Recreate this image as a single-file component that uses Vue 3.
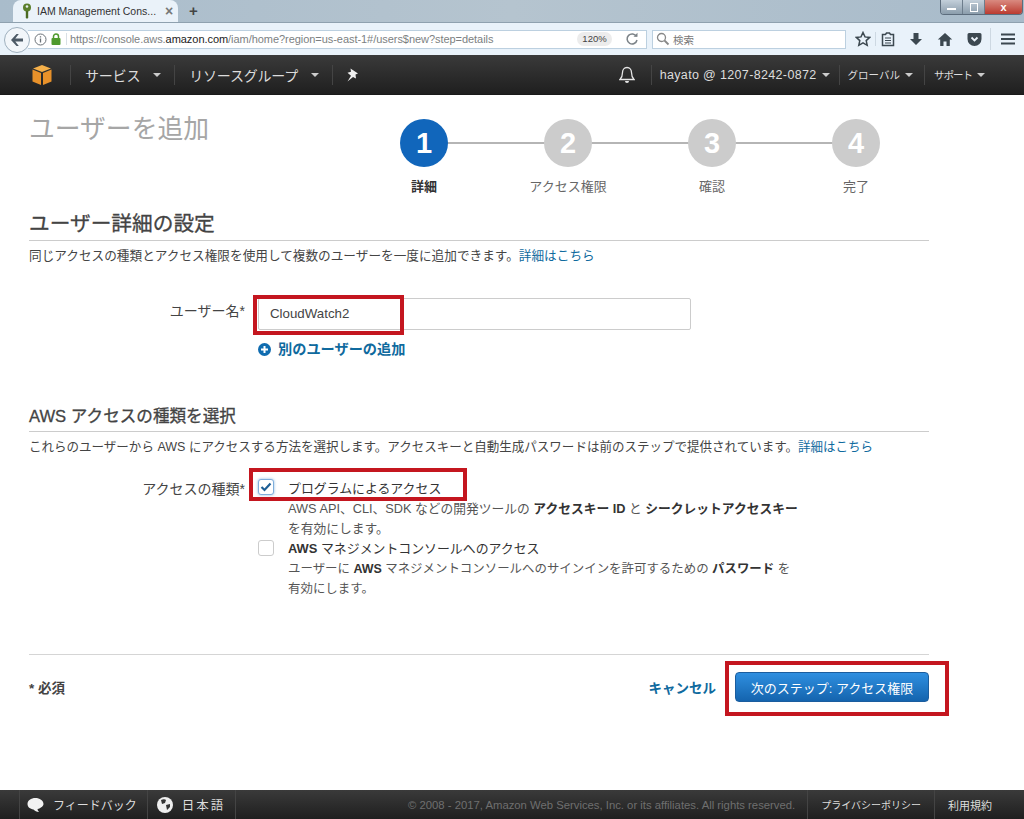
<template>
  <div class="page">
    <div class="tabstrip">
      <div class="tab">
        <svg class="favicon" width="10" height="16" viewBox="0 0 10 16"><circle cx="5" cy="4.500" r="4" fill="#5b7f2c"/><circle cx="5" cy="3.500" r="1.300" fill="#e8eef0"/><path d="M3.800 8h2.400v6.500L5 16l-1.200-1.500z" fill="#4a6a22"/></svg>
        <span class="tab-title">IAM Management Cons...</span>
        <span class="tab-close">×</span>
      </div>
      <span class="tab-plus">+</span>
      <div class="win-btns">
        <span class="win-btn"><i class="win-min"></i></span>
        <span class="win-btn"><i class="win-max"></i></span>
        <span class="win-btn win-close">x</span>
      </div>
    </div>

    <div class="toolbar">
      <span class="back">
        <svg width="16" height="14" viewBox="0 0 16 14"><path d="M7.500 1 2 7l5.500 6h2.300L6.300 8.500H14v-3H6.300L9.800 1z" fill="#4d5a66"/></svg>
      </span>
      <div class="urlbar">
        <svg class="info" width="13" height="13" viewBox="0 0 13 13"><circle cx="6.500" cy="6.500" r="5.500" fill="none" stroke="#6b7278"/><path d="M6.500 5.500v4M6.500 3.200v1.200" stroke="#6b7278" stroke-width="1.300"/></svg>
        <svg class="lock" width="10" height="12" viewBox="0 0 10 12"><path d="M2.500 5V3.500a2.500 2.500 0 0 1 5 0V5" fill="none" stroke="#4f9a2d" stroke-width="1.500"/><rect x="0.500" y="5" width="9" height="7" rx="1" fill="#4f9a2d"/></svg>
        <span class="url">https://console.aws.<b>amazon.com</b>/iam/home?region=us-east-1#/users$new?step=details</span>
        <span class="zoom">120%</span>
        <svg class="reload" width="14" height="14" viewBox="0 0 14 14"><path d="M11.500 4.500A5 5 0 1 0 12 8" fill="none" stroke="#7c8388" stroke-width="1.500"/><path d="M8.500 4.800h4v-4z" fill="#7c8388"/></svg>
      </div>
      <div class="searchbar">
        <svg width="14" height="14" viewBox="0 0 14 14"><circle cx="5.500" cy="5.500" r="4" fill="none" stroke="#888" stroke-width="1.300"/><path d="m8.500 8.500 4 4" stroke="#888" stroke-width="1.800"/></svg>
        <span>検索</span>
      </div>
      <div class="tool-icons">
        <svg width="16" height="16" viewBox="0 0 16 16"><path d="m8 1.500 2 4.400 4.700.5-3.500 3.200 1 4.700L8 11.900l-4.200 2.400 1-4.700L1.300 6.400 6 5.900z" fill="none" stroke="#3c4850" stroke-width="1.500"/></svg>
        <span class="tool-sep"></span>
        <svg class="ic-list" width="14" height="16" viewBox="0 0 14 16"><path d="M1.500 3.500h3l1-1.500h3l1 1.500h3v11h-11z" fill="none" stroke="#3c4850" stroke-width="1.500"/><path d="M4 7h6M4 9.500h6M4 12h6" stroke="#3c4850"/></svg>
        <svg class="ic-down" width="14" height="15" viewBox="0 0 14 15"><path d="M4.500 1h5v6H13l-6 6-6-6h3.500z" fill="#3c4850"/></svg>
        <svg class="ic-home" width="16" height="14" viewBox="0 0 16 14"><path d="M8 1 .8 7.500h2.400V14h3.300V9.500h3V14h3.300V7.500h2.400z" fill="#3c4850"/></svg>
        <svg class="ic-pocket" width="15" height="14" viewBox="0 0 15 14"><path d="M2 1h11a1.500 1.500 0 0 1 1.500 1.500V7a7 7 0 0 1-14 0V2.500A1.500 1.500 0 0 1 2 1z" fill="#3c4850"/><path d="m4.500 5.500 3 3 3-3" fill="none" stroke="#eaf2f9" stroke-width="1.800"/></svg>
        <span class="tool-sep tool-sep-2"></span>
        <svg class="ic-menu" width="14" height="12" viewBox="0 0 14 12"><path d="M0 1.500h14M0 6h14M0 10.500h14" stroke="#3c4850" stroke-width="2"/></svg>
      </div>
    </div>

    <div class="console-nav">
      <svg class="aws-cube" width="22" height="22" viewBox="0 0 22 22"><path d="M11 1 2 4.500 11 8l9-3.500z" fill="#f5b04a"/><path d="M1.500 5.500 10 9v12l-8.500-3.500z" fill="#e8912a"/><path d="M20.500 5.500 12 9v12l8.500-3.500z" fill="#e8912a"/></svg>
      <span class="nav-sep"></span>
      <span class="nav-item nav-big">サービス<i class="caret"></i></span>
      <span class="nav-sep"></span>
      <span class="nav-item nav-big">リソースグループ<i class="caret"></i></span>
      <span class="nav-sep"></span>
      <svg class="pin" width="14" height="14" viewBox="0 0 14 14"><path d="M5.500.5 13 5.500l-2.500 1 .5 4-3-1.500L2.500 13.500 6 7.800 2.500 4.800l3.500-1z" fill="#f0f0f0"/></svg>
      <span class="spacer"></span>
      <svg class="bell" width="16" height="18" viewBox="0 0 16 18"><path d="M8 1.500c-3 0-4.500 2.500-4.500 5 0 4-1 5.500-2.500 7h14c-1.500-1.500-2.500-3-2.500-7 0-2.500-1.500-5-4.500-5z" fill="none" stroke="#e6e6e6" stroke-width="1.300"/><path d="M6 15a2 2 0 0 0 4 0z" fill="#e6e6e6"/></svg>
      <span class="nav-sep"></span>
      <span class="nav-item nav-user">hayato @ 1207-8242-0872<i class="caret caret-sm"></i></span>
      <span class="nav-sep"></span>
      <span class="nav-item nav-small">グローバル<i class="caret caret-sm"></i></span>
      <span class="nav-sep"></span>
      <span class="nav-item nav-small nav-support">サポート<i class="caret caret-sm"></i></span>
    </div>

    <main class="content">
      <div class="wizard-head">
        <h1>ユーザーを追加</h1>
        <ol class="steps">
          <li v-for="(s, i) in steps" :key="s" class="step" :class="{ active: i === 0 }">
            <span class="circle">{{ i + 1 }}</span>
            <span class="step-label">{{ s }}</span>
          </li>
        </ol>
      </div>

      <h2 class="first">ユーザー詳細の設定</h2>
      <p class="desc desc-1">同じアクセスの種類とアクセス権限を使用して複数のユーザーを一度に追加できます。<a>詳細はこちら</a></p>

      <div class="form-row name-row">
        <label>ユーザー名*</label>
        <div class="name-field">
          <div class="input">CloudWatch2<span class="mark mark-name"></span></div>
          <a class="add-user">
            <svg width="13" height="13" viewBox="0 0 13 13"><circle cx="6.500" cy="6.500" r="6.500" fill="#0f6cb0"/><path d="M6.500 3v7M3 6.500h7" stroke="#fff" stroke-width="2"/></svg>
            別のユーザーの追加
          </a>
        </div>
      </div>

      <h2 class="second">AWS アクセスの種類を選択</h2>
      <p class="desc desc-2">これらのユーザーから AWS にアクセスする方法を選択します。アクセスキーと自動生成パスワードは前のステップで提供されています。<a>詳細はこちら</a></p>

      <div class="form-row access-row">
        <label>アクセスの種類*</label>
        <div class="options">
          <div class="option">
            <span class="check on">
              <svg width="12" height="10" viewBox="0 0 12 10"><path d="m1.500 5 3 3 6-6.500" fill="none" stroke="#1d5f96" stroke-width="2.200"/></svg>
            </span>
            <div class="opt-body">
              <div class="opt-title">プログラムによるアクセス</div>
              <div class="opt-text">AWS API、CLI、SDK などの開発ツールの <b>アクセスキー ID</b> と <b>シークレットアクセスキー</b><br>を有効にします。</div>
            </div>
            <span class="mark mark-access"></span>
          </div>
          <div class="option option-2">
            <span class="check"></span>
            <div class="opt-body">
              <div class="opt-title"><b>AWS</b> マネジメントコンソールへのアクセス</div>
              <div class="opt-text">ユーザーに <b>AWS</b> マネジメントコンソールへのサインインを許可するための <b>パスワード</b> を<br>有効にします。</div>
            </div>
          </div>
        </div>
      </div>

      <div class="actions">
        <span class="required">* 必須</span>
        <a class="cancel">キャンセル</a>
        <button class="next">次のステップ: アクセス権限<span class="mark mark-next"></span></button>
      </div>
    </main>

    <footer class="footer">
      <span class="foot-sep foot-first"></span>
      <svg class="foot-bubble" width="17" height="16" viewBox="0 0 17 16"><path d="M8.500 1C4 1 .5 3.500.5 7c0 3 2.500 5 6 5.500 1.500 1.500 3 2.500 5.500 2.500-1-1-1.500-2-1.500-3 3.500-.8 6-3 6-5 0-3.500-4-6-8-6z" fill="#f2f2f2"/></svg>
      <span class="foot-item">フィードバック</span>
      <span class="foot-sep"></span>
      <svg class="foot-globe" width="16" height="16" viewBox="0 0 16 16"><circle cx="8" cy="8" r="8" fill="#eee"/><path d="M4 3c2-1 4-1 5 0l-1 3-3 1zM9 8l4-1 0 3-3 3z" fill="#333"/></svg>
      <span class="foot-item foot-lang">日本語</span>
      <span class="foot-sep"></span>
      <span class="spacer"></span>
      <span class="copy">© 2008 - 2017, Amazon Web Services, Inc. or its affiliates. All rights reserved.</span>
      <span class="foot-sep"></span>
      <span class="foot-link">プライバシーポリシー</span>
      <span class="foot-sep"></span>
      <span class="foot-link foot-last">利用規約</span>
    </footer>
  </div>
</template>

<script setup>
const steps = ['詳細', 'アクセス権限', '確認', '完了'];
</script>

<style>
html, body {
  margin: 0;
  background: #fff;
}
</style>

<style scoped>
.page {
  width: 1024px;
  height: 819px;
  display: flex;
  flex-direction: column;
  overflow: hidden;
  font-family: "Liberation Sans", "Noto Sans CJK JP", sans-serif;
  color: #444;
  font-size: 13px;
}

/* browser chrome */
.tabstrip {
  height: 23px;
  flex: none;
  display: flex;
  align-items: flex-end;
  padding-left: 13px;
  background: linear-gradient(90deg, #a9bccb, #b5c4cf 50%, #a8bbca);
  border-bottom: 1px solid #8fa1af;
  box-sizing: border-box;
}
.tab {
  width: 165px;
  height: 22px;
  display: flex;
  align-items: center;
  box-sizing: border-box;
  padding-left: 9px;
  background: #eaf2f9;
  border-radius: 8px 8px 0 0;
}
.favicon { margin-right: 4px; flex: none; }
.tab-title { font-size: 10.500px; color: #333; white-space: nowrap; margin-left: 1px; }
.tab-close { margin-left: 9px; color: #777; font-size: 14px; font-weight: bold; }
.tab-plus { margin: 0 0 3px 11px; color: #444; font-size: 15px; font-weight: bold; }
.win-btns {
  margin-left: auto;
  margin-right: 1px;
  align-self: flex-start;
  display: flex;
  height: 14px;
  border: 1px solid #5c6c7c;
  border-top: none;
  border-radius: 0 0 4px 4px;
  overflow: hidden;
}
.win-btn {
  width: 21px;
  display: flex;
  align-items: center;
  justify-content: center;
  background: linear-gradient(#c3cfda, #8b9dac);
  border-right: 1px solid #6d7d8c;
}
.win-min { width: 9px; height: 2px; background: #fff; margin-top: 4px; }
.win-max { width: 6px; height: 7px; border: 1px solid #fff; }
.win-close {
  width: 37px;
  background: linear-gradient(#d98a80, #bb3b30);
  color: #fff;
  font-size: 11px;
  font-weight: bold;
  border: none;
}
.toolbar {
  height: 32px;
  flex: none;
  display: flex;
  align-items: center;
  background: #e9f2fa;
  position: relative;
  box-sizing: border-box;
  padding: 0 0 0 28px;
}
.back {
  position: absolute;
  left: 4px;
  top: 4px;
  width: 24px;
  height: 24px;
  border-radius: 50%;
  border: 1px solid #9fb0be;
  background: #f2f6fa;
  display: flex;
  align-items: center;
  justify-content: center;
  z-index: 1;
}
.urlbar {
  width: 619px;
  height: 19px;
  flex: none;
  display: flex;
  align-items: center;
  background: #fff;
  border: 1px solid #bcd0e0;
  border-left: none;
  box-sizing: border-box;
  padding-left: 6px;
}
.info { flex: none; }
.lock { flex: none; margin-left: 4px; }
.url {
  margin-left: 5px;
  padding-left: 3px;
  border-left: 1px solid #d8dfe5;
  font-size: 11px;
  letter-spacing: -0.05px;
  color: #7c7f82;
  white-space: nowrap;
}
.url b { color: #222; font-weight: normal; }
.zoom {
  margin-left: auto;
  width: 35px;
  height: 14px;
  line-height: 14px;
  text-align: center;
  background: #ececec;
  border-radius: 7px;
  font-size: 9.500px;
  color: #444;
}
.reload { margin: 0 7px 0 13px; flex: none; }
.searchbar {
  margin-left: 5px;
  width: 194px;
  height: 19px;
  flex: none;
  display: flex;
  align-items: center;
  gap: 3px;
  padding-left: 3px;
  box-sizing: border-box;
  background: #fff;
  border: 1px solid #bcd0e0;
  font-size: 10.500px;
  color: #777;
}
.tool-icons {
  display: flex;
  align-items: center;
  margin-left: 9px;
}
.tool-icons svg { flex: none; }
.tool-sep { width: 1px; height: 14px; background: #cdd8e2; margin-left: 4px; }
.ic-list { margin-left: 5px; }
.ic-down { margin-left: 14px; }
.ic-home { margin-left: 14px; }
.ic-pocket { margin-left: 14px; }
.tool-sep-2 { height: 22px; margin-left: 8px; }
.ic-menu { margin-left: 10px; }

/* aws console nav */
.console-nav {
  height: 40px;
  flex: none;
  display: flex;
  align-items: center;
  box-sizing: border-box;
  padding: 0 0 0 31px;
  background: linear-gradient(#3a3a3a, #1f1f1f);
  border-bottom: 1px solid #1a1a1a;
  color: #ddd;
}
.aws-cube { margin-right: 17px; }
.nav-sep { width: 1px; height: 20px; background: #444; }
.nav-item { display: flex; align-items: center; white-space: nowrap; }
.nav-big { font-size: 14px; letter-spacing: -0.2px; padding: 0 0 0 14px; }
.nav-big .caret { margin: 1px 13px 0 13px; }
.caret {
  width: 0;
  height: 0;
  border-left: 4px solid transparent;
  border-right: 4px solid transparent;
  border-top: 4px solid #ccc;
}
.caret-sm { margin: 0 0 0 5px; }
.pin { margin-left: 12px; }
.spacer { flex: 1; }
.bell { margin-right: 16px; }
.nav-user { font-size: 12.500px; letter-spacing: 0.35px; padding: 0 9px 0 8px; }
.nav-small { font-size: 10.500px; padding: 0 11px 0 8px; }
.nav-support { letter-spacing: -1px; padding: 0 39px 0 9px; }

/* wizard */
.content {
  flex: 1;
  padding: 0 95px 0 29px;
  min-height: 0;
}
.wizard-head {
  height: 115px;
  display: flex;
  box-sizing: border-box;
}
h1 {
  margin: 19px 0 0;
  font-size: 25.800px;
  line-height: 30px;
  font-weight: normal;
  color: #a6a6a6;
  width: 323px;
  flex: none;
}
.steps {
  list-style: none;
  margin: 24px 0 0;
  padding: 0;
  display: flex;
}
.step {
  width: 144px;
  display: flex;
  flex-direction: column;
  align-items: center;
  position: relative;
}
.step:not(:last-child)::after {
  content: "";
  position: absolute;
  left: 72px;
  top: 23px;
  width: 144px;
  height: 2px;
  background: #b5b5b5;
}
.circle {
  width: 48px;
  height: 48px;
  border-radius: 50%;
  background: #cccccc;
  color: #fff;
  font-size: 29px;
  font-weight: bold;
  line-height: 48px;
  text-align: center;
  position: relative;
  z-index: 1;
}
.step.active .circle { background: #1166bb; }
.step-label { margin-top: 11px; font-size: 13px; line-height: 18px; color: #666; }
.step.active .step-label { color: #333; font-weight: bold; }

h2 {
  margin: 0;
  font-weight: normal;
  color: #444;
  border-bottom: 1px solid #ccc;
  -webkit-text-stroke: 0.3px #444;
}
h2.first {
  font-size: 20.700px;
  line-height: 27px;
  padding-bottom: 3px;
}
h2.second {
  font-size: 16.600px;
  line-height: 24px;
  margin-top: 47px;
  padding-bottom: 2px;
}
.desc {
  margin: 6px 0 0;
  line-height: 18px;
  color: #444;
  white-space: nowrap;
}
.desc-1 { font-size: 12.650px; }
.desc-2 { font-size: 12.520px; }
.desc a { color: #0f6a9e; }

.form-row { display: flex; }
.form-row label {
  width: 229px;
  flex: none;
  text-align: right;
  font-size: 14px;
  color: #444;
  padding-right: 13px;
  box-sizing: border-box;
}
.name-row { margin-top: 33px; }
.name-row label { padding-top: 4px; line-height: 18px; }
.name-field { width: 433px; }
.input {
  height: 32px;
  line-height: 30px;
  padding-left: 11px;
  box-sizing: border-box;
  border: 1px solid #ccc;
  border-radius: 2px;
  font-size: 13.300px;
  color: #444;
  position: relative;
}
.add-user {
  display: flex;
  align-items: center;
  gap: 7px;
  margin-top: 10px;
  font-size: 14.200px;
  line-height: 18px;
  font-weight: bold;
  color: #0f6a9e;
}

.access-row { margin-top: 23px; }
.access-row label { padding-top: 1px; line-height: 18px; }
.options { width: 600px; }
.option { display: flex; position: relative; }
.check {
  width: 16px;
  height: 16px;
  flex: none;
  border: 1px solid #ccc;
  border-radius: 3px;
  box-sizing: border-box;
  display: flex;
  align-items: center;
  justify-content: center;
  background: #fff;
}
.option-2 .check { margin-top: 1px; }
.check.on { border-color: #7faedb; box-shadow: 0 0 3px #8ab7e0; }
.opt-body { margin-left: 14px; }
.opt-title { font-size: 12.900px; line-height: 20px; color: #333; }
.opt-text { font-size: 12.750px; line-height: 20px; color: #555; white-space: nowrap; }
.option-2 .opt-text { font-size: 12.450px; }
.opt-body b { color: #333; }

.actions {
  margin-top: 55px;
  border-top: 1px solid #d5d5d5;
  display: flex;
  align-items: center;
  height: 65px;
  box-sizing: border-box;
}
.required { font-size: 13.500px; font-weight: bold; color: #444; }
.cancel {
  margin-left: auto;
  font-size: 13.500px;
  font-weight: bold;
  color: #0f6a9e;
}
.next {
  margin: 0 0 0 19px;
  width: 194px;
  height: 30px;
  padding: 0;
  border: 1px solid #1b5d9e;
  border-radius: 4px;
  background: linear-gradient(#2f8fe0, #1464ae);
  color: #fff;
  font-family: inherit;
  font-size: 13px;
  position: relative;
  white-space: nowrap;
}

/* red annotation boxes drawn over the screenshot */
.mark {
  position: absolute;
  border: 4px solid #c4161f;
  box-sizing: border-box;
  pointer-events: none;
}
.mark-name { left: -6px; top: -4px; width: 151px; height: 40px; }
.mark-access { left: -9px; top: -11px; width: 218px; height: 33px; }
.mark-next { left: -11px; top: -12px; width: 224px; height: 55px; }

/* footer */
.footer {
  height: 29px;
  flex: none;
  display: flex;
  align-items: center;
  background: linear-gradient(#3a3a3a, #1f1f1f);
  font-size: 12px;
  color: #ddd;
}
.foot-sep { width: 1px; height: 29px; background: #444; }
.foot-first { margin-left: 19px; }
.foot-bubble { margin-left: 7px; }
.foot-item { margin: 0 10px 0 9px; white-space: nowrap; }
.foot-lang { letter-spacing: 2px; font-size: 12.500px; }
.foot-globe { margin-left: 9px; }
.copy { font-size: 11.300px; color: #6f6f6f; margin-right: 12px; white-space: nowrap; }
.foot-link { font-size: 10px; padding: 0 13px; white-space: nowrap; }
.foot-last { font-size: 11px; padding-right: 32px; }
</style>
